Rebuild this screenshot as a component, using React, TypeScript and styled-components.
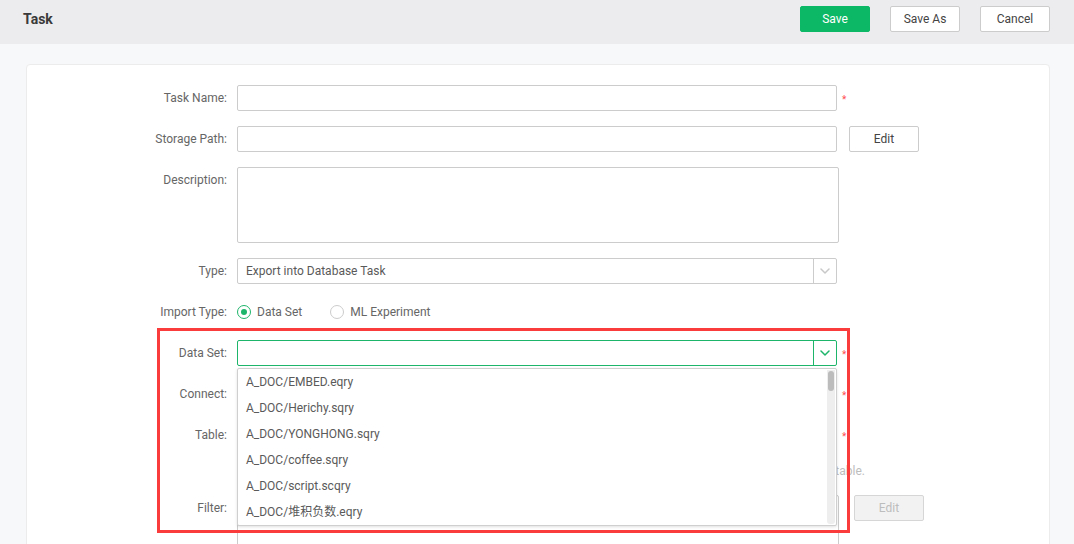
import React from "react";
import styled, { createGlobalStyle } from "styled-components";

const Global = createGlobalStyle`
  html, body { margin: 0; padding: 0; }
  body {
    background: #f7f8fa;
    font-family: Roboto, "Noto Sans CJK SC", "Liberation Sans", sans-serif;
    font-size: 12px;
    color: #333;
    overflow: hidden;
  }
  * { box-sizing: border-box; }
`;

const Page = styled.div`
  width: 1074px;
  height: 544px;
  overflow: hidden;
  display: flex;
  flex-direction: column;
`;

const Header = styled.header`
  height: 44px;
  flex: none;
  background: #ececee;
  display: flex;
  align-items: flex-start;
  padding: 6px 24px 0 23px;
`;

const Title = styled.h1`
  margin: 0;
  flex: 1;
  font-size: 14px;
  font-weight: 700;
  color: #3a3a3a;
  line-height: 26px;
`;

const Actions = styled.div`
  display: flex;
  gap: 20px;
`;

const Button = styled.button<{ $primary?: boolean; $disabled?: boolean }>`
  width: 70px;
  height: 26px;
  border-radius: 2px;
  font-family: inherit;
  font-size: 12px;
  padding: 0;
  cursor: pointer;
  border: 1px solid
    ${(p) => (p.$primary ? "#0cb865" : p.$disabled ? "#d6d6d6" : "#cccccc")};
  background: ${(p) =>
    p.$primary ? "#0cb865" : p.$disabled ? "#f2f2f2" : "#ffffff"};
  color: ${(p) => (p.$primary ? "#fff" : p.$disabled ? "#bdbdbd" : "#444")};
`;

const Body = styled.main`
  flex: 1;
  padding: 20px 24px 0 26px;
  min-height: 0;
`;

const Card = styled.section`
  position: relative;
  background: #fff;
  border: 1px solid #ececec;
  border-radius: 4px;
  height: 600px;
  padding: 20px 0 0 80px;
  display: flex;
  flex-direction: column;
  gap: 15px;
`;

const Row = styled.div<{ $top?: boolean }>`
  display: flex;
  align-items: ${(p) => (p.$top ? "flex-start" : "center")};
`;

const Label = styled.label<{ $top?: boolean }>`
  width: 130px;
  flex: none;
  text-align: right;
  padding-right: 10px;
  color: #666;
  line-height: 16px;
  padding-top: ${(p) => (p.$top ? "5px" : "0")};
`;

const Control = styled.div<{ $w?: number }>`
  position: relative;
  width: ${(p) => p.$w ?? 600}px;
  flex: none;
`;

const Input = styled.div`
  height: 26px;
  border: 1px solid #cccccc;
  border-radius: 2px;
  background: #fff;
`;

const TextArea = styled.div<{ $h: number }>`
  height: ${(p) => p.$h}px;
  border: 1px solid #cccccc;
  border-radius: 2px;
  background: #fff;
`;

const Select = styled.div<{ $active?: boolean }>`
  height: 26px;
  border: 1px solid ${(p) => (p.$active ? "#1db56a" : "#cccccc")};
  border-radius: 2px;
  background: #fff;
  display: flex;
  align-items: stretch;
`;

const SelectValue = styled.div`
  flex: 1;
  padding-left: 8px;
  line-height: 24px;
  color: #5a5a5a;
`;

const SelectArrow = styled.div<{ $active?: boolean }>`
  width: 23px;
  border-left: 1px solid ${(p) => (p.$active ? "#1db56a" : "#cccccc")};
  display: flex;
  align-items: center;
  justify-content: center;
  color: ${(p) => (p.$active ? "#1db56a" : "#c8c8c8")};
`;

const Required = styled.span`
  color: #ff4d4f;
  font-size: 10px;
  margin-left: 5px;
  margin-top: 3px;
`;

const Side = styled.div<{ $gap: number }>`
  margin-left: ${(p) => p.$gap}px;
`;

const Radios = styled.div`
  display: flex;
  align-items: center;
  gap: 28px;
  height: 26px;
`;

const RadioItem = styled.span`
  display: inline-flex;
  align-items: center;
  gap: 6px;
  color: #666;
`;

const RadioDot = styled.span<{ $on?: boolean }>`
  width: 14px;
  height: 14px;
  border-radius: 50%;
  border: 1px solid ${(p) => (p.$on ? "#1db56a" : "#cccccc")};
  display: inline-flex;
  align-items: center;
  justify-content: center;
  &::after {
    content: "";
    width: 6px;
    height: 6px;
    border-radius: 50%;
    background: ${(p) => (p.$on ? "#1db56a" : "transparent")};
  }
`;

const Hint = styled.div`
  margin-left: 130px;
  width: 628px;
  text-align: right;
  overflow: hidden;
  color: #bdbdbd;
  line-height: 17px;
  height: 17px;
  white-space: nowrap;
`;

const Dropdown = styled.ul`
  position: absolute;
  left: 0;
  top: 28px;
  width: 600px;
  margin: 0;
  padding: 0;
  list-style: none;
  background: #fff;
  border: 1px solid #cfcfcf;
  border-radius: 2px;
  box-shadow: 0 1px 3px rgba(0, 0, 0, 0.12);
  z-index: 5;
  overflow: hidden;
`;

const Option = styled.li`
  height: 26px;
  line-height: 26px;
  padding-left: 8px;
  color: #5a5a5a;
  white-space: nowrap;
`;

const ScrollTrack = styled.div`
  position: absolute;
  right: 1px;
  top: 1px;
  bottom: 1px;
  width: 8px;
  background: #eeeeee;
  border-radius: 0 0 3px 3px;
`;

const ScrollThumb = styled.div`
  position: absolute;
  left: 1px;
  top: 1px;
  width: 6px;
  height: 20px;
  border-radius: 3px;
  background: #bcbcbc;
`;

const Highlight = styled.div`
  position: absolute;
  left: 130px;
  top: 263px;
  width: 693px;
  height: 205px;
  border: 3px solid #fb3c3c;
  pointer-events: none;
  z-index: 10;
`;

const Chevron = () => (
  <svg width="10" height="6" viewBox="0 0 10 6" fill="none">
    <polyline
      points="1,1 5,5 9,1"
      stroke="currentColor"
      strokeWidth="1.5"
      strokeLinecap="round"
      strokeLinejoin="round"
    />
  </svg>
);

const options = [
  "A_DOC/EMBED.eqry",
  "A_DOC/Herichy.sqry",
  "A_DOC/YONGHONG.sqry",
  "A_DOC/coffee.sqry",
  "A_DOC/script.scqry",
  "A_DOC/堆积负数.eqry",
];

export default function App() {
  return (
    <Page>
      <Global />
      <Header>
        <Title>Task</Title>
        <Actions>
          <Button $primary>Save</Button>
          <Button>Save As</Button>
          <Button>Cancel</Button>
        </Actions>
      </Header>
      <Body>
        <Card>
          <Row>
            <Label>Task Name:</Label>
            <Control>
              <Input />
            </Control>
            <Required>*</Required>
          </Row>
          <Row>
            <Label>Storage Path:</Label>
            <Control>
              <Input />
            </Control>
            <Side $gap={12}>
              <Button>Edit</Button>
            </Side>
          </Row>
          <Row $top>
            <Label $top>Description:</Label>
            <Control $w={602}>
              <TextArea $h={76} />
            </Control>
          </Row>
          <Row>
            <Label>Type:</Label>
            <Control>
              <Select>
                <SelectValue>Export into Database Task</SelectValue>
                <SelectArrow>
                  <Chevron />
                </SelectArrow>
              </Select>
            </Control>
          </Row>
          <Row>
            <Label>Import Type:</Label>
            <Radios>
              <RadioItem>
                <RadioDot $on />
                Data Set
              </RadioItem>
              <RadioItem>
                <RadioDot />
                ML Experiment
              </RadioItem>
            </Radios>
          </Row>
          <Row>
            <Label>Data Set:</Label>
            <Control>
              <Select $active>
                <SelectValue />
                <SelectArrow $active>
                  <Chevron />
                </SelectArrow>
              </Select>
              <Dropdown>
                {options.map((o) => (
                  <Option key={o}>{o}</Option>
                ))}
                <ScrollTrack>
                  <ScrollThumb />
                </ScrollTrack>
              </Dropdown>
            </Control>
            <Required>*</Required>
          </Row>
          <Row>
            <Label>Connect:</Label>
            <Control>
              <Select>
                <SelectValue />
                <SelectArrow>
                  <Chevron />
                </SelectArrow>
              </Select>
            </Control>
            <Required>*</Required>
          </Row>
          <Row>
            <Label>Table:</Label>
            <Control>
              <Select>
                <SelectValue />
                <SelectArrow>
                  <Chevron />
                </SelectArrow>
              </Select>
            </Control>
            <Required>*</Required>
          </Row>
          <Hint>
            If the table does not exist, the system will create the table.
          </Hint>
          <Row $top>
            <Label $top>Filter:</Label>
            <Control $w={602}>
              <TextArea $h={76} />
            </Control>
            <Side $gap={15}>
              <Button $disabled>Edit</Button>
            </Side>
          </Row>
          <Highlight />
        </Card>
      </Body>
    </Page>
  );
}
